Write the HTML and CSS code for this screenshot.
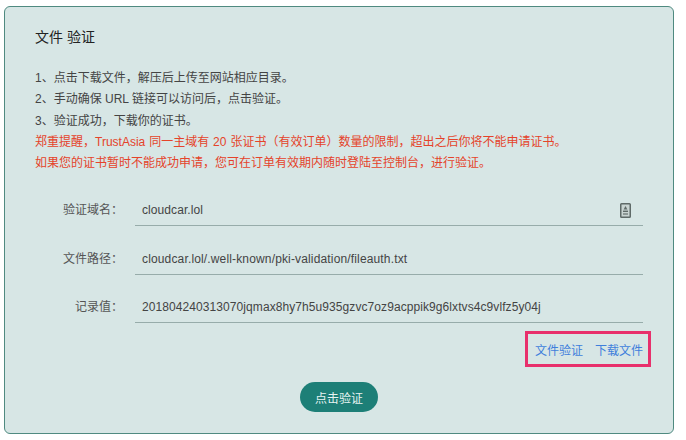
FILE: index.html
```html
<!DOCTYPE html>
<html lang="zh-CN">
<head>
    <meta charset="UTF-8">
    <title>文件验证</title>
    <link rel="stylesheet" href="styles.css">
</head>
<body>
    <div class="card">
        <h2 class="card__title">文件 验证</h2>
        <div class="steps">
            <p>1、点击下载文件，解压后上传至网站相应目录。</p>
            <p>2、手动确保 URL 链接可以访问后，点击验证。</p>
            <p>3、验证成功，下载你的证书。</p>
            <p class="warn">郑重提醒，TrustAsia 同一主域有 20 张证书（有效订单）数量的限制，超出之后你将不能申请证书。</p>
            <p class="warn">如果您的证书暂时不能成功申请，您可在订单有效期内随时登陆至控制台，进行验证。</p>
        </div>
        <div class="form">
            <div class="row">
                <label class="row__label">验证域名：</label>
                <div class="row__field">
                    <span class="row__value">cloudcar.lol</span>
                    <svg class="copy-icon" width="11" height="15" viewBox="0 0 11 15">
                        <rect x="0.75" y="0.75" width="9.5" height="13.5" rx="0.8" fill="#c9d4d2" stroke="#5f6a68" stroke-width="1.5"/>
                        <path d="M5.5 3 L7.4 6.6 H3.6 Z" fill="#5f6a68"/>
                        <rect x="3" y="7.6" width="5" height="1.4" fill="#5f6a68"/>
                        <rect x="3" y="10" width="5" height="2" fill="#8d9896"/>
                    </svg>
                </div>
            </div>
            <div class="row">
                <label class="row__label">文件路径：</label>
                <div class="row__field"><span class="row__value row__value--path">cloudcar.lol/.well-known/pki-validation/fileauth.txt</span></div>
            </div>
            <div class="row">
                <label class="row__label">记录值：</label>
                <div class="row__field"><span class="row__value">201804240313070jqmax8hy7h5u935gzvc7oz9acppik9g6lxtvs4c9vlfz5y04j</span></div>
            </div>
        </div>
        <div class="links-wrap">
            <div class="links">
                <a href="#">文件验证</a>
                <a href="#">下载文件</a>
            </div>
        </div>
        <div class="actions">
            <button class="btn">点击验证</button>
        </div>
    </div>
</body>
</html>
```

FILE: styles.css
```css
* {
    margin: 0;
    padding: 0;
    box-sizing: border-box;
}

body {
    background-color: #fff;
    padding: 6px 12px 0 4px;
    font-family: "Liberation Sans", "Noto Sans CJK SC", sans-serif;
    font-size: 12px;
    color: #333;
}

.card {
    width: 670px;
    height: 428px;
    padding: 20px 30px 0 30px;
    background-color: #d7e6e5;
    border: 1px solid #4f8a80;
    border-radius: 6px;
}

.card__title {
    font-size: 14px;
    font-weight: normal;
    line-height: 20px;
    color: #222;
}

.steps {
    margin-top: 21px;
    line-height: 21.25px;
    color: #444;
}

.warn {
    color: #e5432a;
    word-spacing: 0.6px;
}

.form {
    margin-top: 10px;
}

.row {
    display: flex;
    height: 48.5px;
    padding-top: 6px;
}

.row__label {
    width: 88px;
    padding-top: 10px;
    text-align: right;
    color: #555;
}

.row__field {
    flex: none;
    width: 508px;
    margin-left: 12px;
    height: 36px;
    padding: 5px 7px 0 7px;
    display: flex;
    justify-content: space-between;
    align-items: center;
    border-bottom: 1px solid #97acaa;
    color: #444;
}

.row__value {
    letter-spacing: 0.08px;
}

.row__value--path {
    letter-spacing: 0.15px;
}

.copy-icon {
    margin-right: 5px;
}

.links-wrap {
    display: flex;
    justify-content: flex-end;
    margin-top: 0.75px;
    margin-right: -8px;
}

.links {
    display: flex;
    gap: 12px;
    width: 126px;
    height: 36px;
    padding: 9px 0 0 7px;
    border: 3px solid #e8306c;
    line-height: 16px;
}

.links a {
    color: #3f7fdc;
    text-decoration: none;
}

.actions {
    display: flex;
    justify-content: center;
    margin-top: 15.5px;
}

.btn {
    width: 78px;
    height: 30px;
    border: none;
    border-radius: 15px;
    background-color: #1d7f77;
    color: #e6f3f1;
    font-family: inherit;
    font-size: 12px;
}
```
